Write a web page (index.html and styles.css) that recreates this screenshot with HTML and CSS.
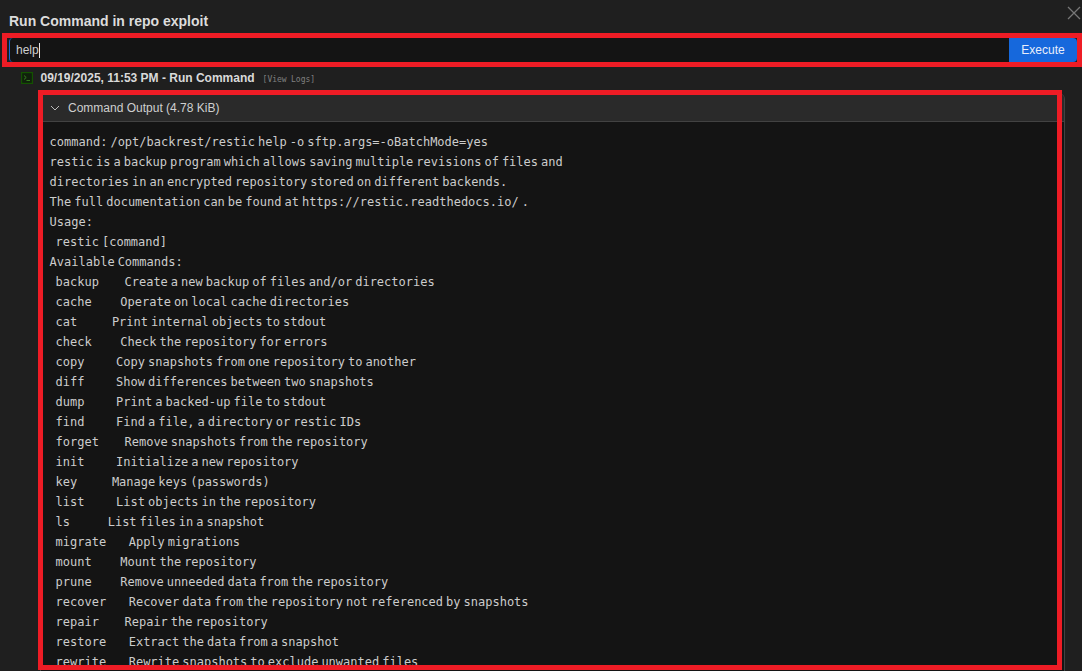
FILE: index.html
```html
<!DOCTYPE html>
<html lang="en">
<head>
<meta charset="utf-8">
<title>Run Command</title>
<link rel="stylesheet" href="styles.css">
</head>
<body>
<div class="modal">
  <svg class="close" width="14" height="14" viewBox="0 0 14 14"><path d="M1 1L13 13M13 1L1 13" stroke="#777777" stroke-width="1.3" fill="none"/></svg>
  <h1 class="title">Run Command in repo exploit</h1>
  <div class="cmd">
    <div class="input"><span>help</span><i class="caret"></i></div>
    <button class="exec">Execute</button>
  </div>
  <div class="op">
    <svg class="op-icon" width="12" height="12" viewBox="0 0 12 12"><rect x="0.6" y="0.6" width="10.8" height="10.8" fill="#10200c" stroke="#135200" stroke-width="1.2"/><path d="M3 3.5L5.2 5.5L3 7.5M5.5 8.5H9" fill="none" stroke="#3a8a1e" stroke-width="0.9"/></svg>
    <div class="op-body">
      <div class="op-head"><strong>09/19/2025, 11:53 PM - Run Command</strong><span class="logs">[View Logs]</span></div>
      <div class="panel">
        <div class="panel-head">
          <svg width="10" height="10" viewBox="0 0 10 10"><path d="M1 3L5 7L9 3" fill="none" stroke="#bdbdbd" stroke-width="1"/></svg>
          <span>Command Output (4.78 KiB)</span>
        </div>
        <div class="output">
          <div class="line">command: /opt/backrest/restic help -o sftp.args=-oBatchMode=yes</div>
          <div class="line">restic is a backup program which allows saving multiple revisions of files and</div>
          <div class="line">directories in an encrypted repository stored on different backends.</div>
          <div class="line">The full documentation can be found at https://restic.readthedocs.io/ .</div>
          <div class="line">Usage:</div>
          <div class="line sub">restic [command]</div>
          <div class="line">Available Commands:</div>
          <div class="line sub"><span class="name">backup</span><span>      Create a new backup of files and/or directories</span></div>
          <div class="line sub"><span class="name">cache</span><span>       Operate on local cache directories</span></div>
          <div class="line sub"><span class="name">cat</span><span>         Print internal objects to stdout</span></div>
          <div class="line sub"><span class="name">check</span><span>       Check the repository for errors</span></div>
          <div class="line sub"><span class="name">copy</span><span>        Copy snapshots from one repository to another</span></div>
          <div class="line sub"><span class="name">diff</span><span>        Show differences between two snapshots</span></div>
          <div class="line sub"><span class="name">dump</span><span>        Print a backed-up file to stdout</span></div>
          <div class="line sub"><span class="name">find</span><span>        Find a file, a directory or restic IDs</span></div>
          <div class="line sub"><span class="name">forget</span><span>      Remove snapshots from the repository</span></div>
          <div class="line sub"><span class="name">init</span><span>        Initialize a new repository</span></div>
          <div class="line sub"><span class="name">key</span><span>         Manage keys (passwords)</span></div>
          <div class="line sub"><span class="name">list</span><span>        List objects in the repository</span></div>
          <div class="line sub"><span class="name">ls</span><span>          List files in a snapshot</span></div>
          <div class="line sub"><span class="name">migrate</span><span>     Apply migrations</span></div>
          <div class="line sub"><span class="name">mount</span><span>       Mount the repository</span></div>
          <div class="line sub"><span class="name">prune</span><span>       Remove unneeded data from the repository</span></div>
          <div class="line sub"><span class="name">recover</span><span>     Recover data from the repository not referenced by snapshots</span></div>
          <div class="line sub"><span class="name">repair</span><span>      Repair the repository</span></div>
          <div class="line sub"><span class="name">restore</span><span>     Extract the data from a snapshot</span></div>
          <div class="line sub"><span class="name">rewrite</span><span>     Rewrite snapshots to exclude unwanted files</span></div>
        </div>
      </div>
    </div>
  </div>
  <div class="mark mark-cmd"></div>
  <div class="mark mark-output"></div>
</div>
</body>
</html>
```
FILE: styles.css
```css
html, body { margin: 0; padding: 0; height: 100%; overflow: hidden; background: #1f1f1f; }
.modal {
  position: relative;
  height: 671px;
  overflow: hidden;
  padding: 12px 5px 0 9px;
  box-sizing: border-box;
  font-family: "Liberation Sans", Arial, sans-serif;
  color: #d9d9d9;
}
.close { position: absolute; top: 6px; right: 1px; }
.title { margin: 0 0 8px; font-size: 14px; line-height: 18px; font-weight: 700; color: #dcdcdc; }
.cmd { display: flex; height: 24px; }
.input {
  flex: 1;
  display: flex;
  align-items: center;
  background: #141414;
  border-left: 1px solid #1668dc;
  border-radius: 4px 0 0 4px;
  padding-left: 6px;
  font-size: 12px;
  color: #cfcfcf;
}
.caret { width: 1px; height: 15px; background: #e6e6e6; }
.exec {
  width: 68px;
  border: 0;
  padding: 0;
  background: #1668dc;
  color: #e8eefb;
  border-radius: 0 4px 4px 0;
  font: 12px "Liberation Sans", Arial, sans-serif;
}
.op { display: flex; margin: 9px 12px 0 12px; }
.op-icon { margin: 1px 7.5px 0 0; flex: none; }
.op-body { flex: 1; min-width: 0; }
.op-head { height: 14px; line-height: 14px; font-size: 12px; color: #d9d9d9; white-space: nowrap; }
.logs { margin-left: 8px; font: 8px "DejaVu Sans Mono", monospace; word-spacing: -0.5px; color: #808080; }
.panel {
  margin: 8px 0 0 -0.5px;
  border: 1px solid #424242;
  border-radius: 6px 6px 0 0;
  overflow: hidden;
}
.panel-head {
  display: flex;
  align-items: center;
  gap: 8px;
  height: 27px;
  padding-left: 9px;
  background: #2a2a2a;
  border-bottom: 1px solid #424242;
  font-size: 12px;
  color: #cfcfcf;
}
.output {
  padding: 10px 8px 0 8.6px;
  background: #141414;
  font: 12px/20px "DejaVu Sans Mono", monospace;
  word-spacing: -4.2px;
  color: #cccccc;
  height: 600px;
}
.line { white-space: pre; }
.sub { padding-left: 6px; }
.name { margin-right: 7.4px; }
.mark { position: absolute; border: 5px solid #ee1c25; box-sizing: border-box; }
.mark-cmd { left: 2px; top: 33px; width: 1080px; height: 34px; }
.mark-output { left: 38px; top: 90px; width: 1024px; height: 580px; }
```
